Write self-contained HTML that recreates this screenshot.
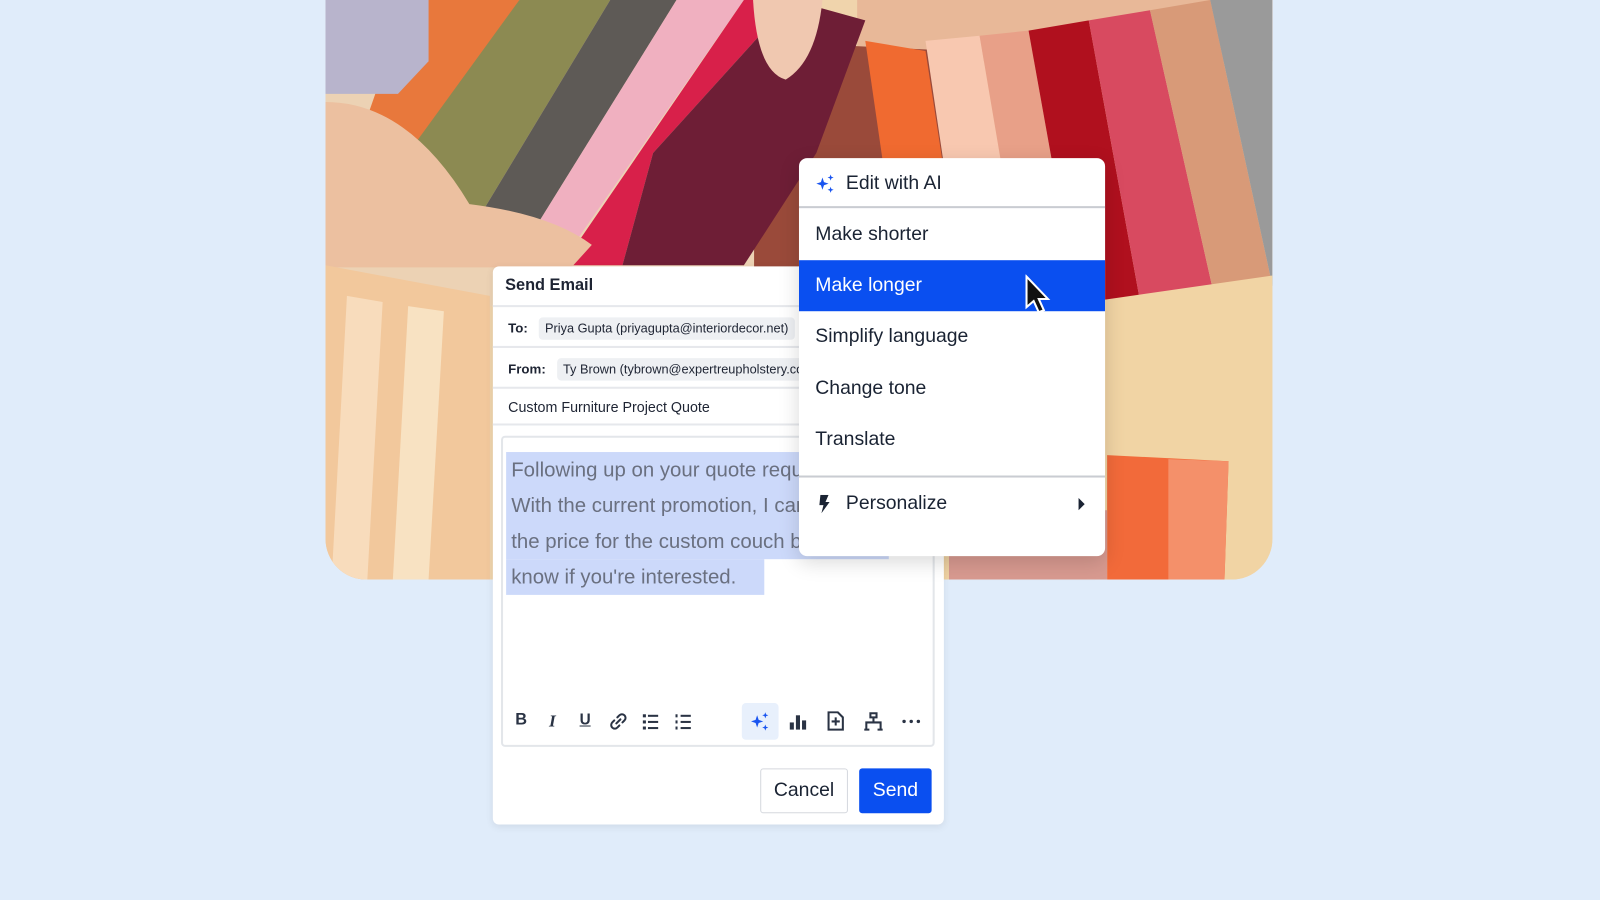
<!DOCTYPE html>
<html><head><style>
*{box-sizing:border-box;margin:0;padding:0}
body{width:1600px;height:900px;overflow:hidden;background:#e0ecfa;font-family:"Liberation Sans",sans-serif}
#w{position:absolute;left:0;top:0;width:1568px;height:882px;transform:scale(1.0204);transform-origin:0 0}
.photo{position:absolute;left:319px;top:0;width:928px;height:568px;border-radius:0 0 40px 40px;overflow:hidden}
.card{position:absolute;left:483px;top:261px;width:442px;height:547px;background:#fff;border-radius:6px;box-shadow:0 2px 8px rgba(0,0,0,.08)}
.row{position:absolute;left:0;width:442px;border-bottom:2px solid #e6e8ec;font-size:13px;color:#1e2433}
.chip{display:inline-block;background:#eef0f3;border-radius:4px;padding:4px 6px;font-size:12.5px}
.menu{position:absolute;left:783px;top:155px;width:300px;height:390px;background:#fff;border-radius:8px;box-shadow:0 6px 20px rgba(0,0,0,.15);overflow:hidden;color:#1a2333;font-size:19px}
.mi{position:absolute;left:0;width:300px;height:50px;line-height:50px;padding-left:16px}
.tb{position:absolute;top:697px}
</style></head><body><div id="w">
<div class="photo">
<svg width="928" height="568" viewBox="319 0 928 568">
 <rect x="319" y="0" width="928" height="568" fill="#f0d4ac"/>
 <rect x="840" y="0" width="407" height="60" fill="#e8b898"/>
 <polygon points="729,40 940,50 940,330 700,270" fill="#9a4a3a"/>
 <polygon points="848,40 907,50 950,330 890,330" fill="#f06a30"/>
 <polygon points="907,40 960,35 1010,330 950,330" fill="#f8c8b0"/>
 <polygon points="960,35 1008,30 1060,320 1010,330" fill="#e8a088"/>
 <polygon points="1008,30 1067,20 1120,310 1060,320" fill="#b0101e"/>
 <polygon points="1067,20 1127,10 1190,290 1120,310" fill="#d84a60"/>
 <polygon points="1127,10 1186,0 1247,280 1190,290" fill="#d89a78"/>
 <polygon points="1186,0 1247,0 1247,280" fill="#9a9a9a"/>
 <polygon points="900,320 1247,270 1247,568 900,568" fill="#f1d4a4"/>
 <polygon points="1085,446 1204,452 1200,568 1085,568" fill="#f26a3a"/>
 <polygon points="1145,450 1204,452 1200,568 1145,568" fill="#f4906a"/>
 <polygon points="930,500 1085,500 1085,568 930,568" fill="#d89a90"/>
 <rect x="319" y="0" width="420" height="300" fill="#ecd2b4"/>
 <polygon points="400,0 509,0 420,200 330,200" fill="#e8783c"/>
 <polygon points="509,0 598,0 473,207 420,200 400,150" fill="#8c8a52"/>
 <polygon points="598,0 663,0 521,229 473,207" fill="#5e5a56"/>
 <polygon points="663,0 729,0 562,240 521,229" fill="#f0b0c0"/>
 <polygon points="729,0 776,0 640,150 610,260 551,260" fill="#d8204a"/>
 <polygon points="776,0 848,20 800,150 729,260 610,260 640,150" fill="#6e1e36"/>
 <polygon points="319,0 420,0 420,60 390,92 319,92" fill="#b8b4cc"/>
 <path d="M319 100 Q400 100 460 200 Q540 210 580 240 L560 262 L319 262 Z" fill="#ecc0a0"/>
 <path d="M319 260 L480 290 L480 568 L319 568 Z" fill="#f2c89c"/>
 <polygon points="340,290 375,296 360,568 325,568" fill="#f8dcbc"/>
 <polygon points="400,300 435,305 420,568 385,568" fill="#f8e2c2"/>
 <path d="M738 0 L806 0 Q800 60 770 78 Q742 70 738 0Z" fill="#f0c8b0"/>
</svg>
</div>
<div class="card">
 <div class="row" style="top:0;height:40px;padding:10px 12px;font-size:16px;font-weight:bold">Send Email</div>
 <div class="row" style="top:40px;height:40px;padding:10px 15px"><b>To:</b>&nbsp;&nbsp; <span class="chip">Priya Gupta (priyagupta@interiordecor.net)</span></div>
 <div class="row" style="top:80px;height:40px;padding:10px 15px;white-space:nowrap;overflow:hidden"><b>From:</b>&nbsp;&nbsp; <span class="chip">Ty Brown (tybrown@expertreupholstery.com)</span></div>
 <div class="row" style="top:120px;height:36px;padding:10px 15px;font-size:14px">Custom Furniture Project Quote</div>
 <div style="position:absolute;left:8px;top:166px;width:425px;height:305px;border:2px solid #e3e6ea;border-radius:4px"></div>
 <div style="position:absolute;left:13px;top:182px;width:375px;height:105px;background:#ccd9fa"></div>
 <div style="position:absolute;left:13px;top:287px;width:253px;height:35px;background:#ccd9fa"></div>
 <div style="position:absolute;left:18px;top:183px;font-size:20px;line-height:35px;color:#6a7080;white-space:nowrap">Following up on your quote request.<br>With the current promotion, I can lower<br>the price for the custom couch by 15%. Let me<br>know if you're interested.</div>
 <div style="position:absolute;left:244px;top:428px;width:36px;height:36px;background:#e8f0fc;border-radius:4px"></div>
</div>
<span class="tb" style="left:505px;font-size:16px;font-weight:bold;color:#2a3344">B</span>
<span class="tb" style="left:538px;font-size:17px;font-weight:bold;font-style:italic;font-family:'Liberation Serif',serif;color:#2a3344">I</span>
<span class="tb" style="left:568px;font-size:15px;font-weight:bold;text-decoration:underline;color:#2a3344">U</span>
<svg class="tb" style="left:597px;top:698px" width="18" height="18" fill="none" stroke="#2a3344" stroke-width="2" stroke-linecap="round"><path d="M7 11l4-4 M8 5l2-2a3 3 0 0 1 5 5l-2 2 M10 13l-2 2a3 3 0 0 1-5-5l2-2"/></svg>
<svg class="tb" style="left:629px;top:699px" width="18" height="16" fill="#2a3344"><rect x="1" y="1" width="3" height="3"/><rect x="1" y="7" width="3" height="3"/><rect x="1" y="13" width="3" height="3"/><rect x="6" y="1.5" width="10" height="2"/><rect x="6" y="7.5" width="10" height="2"/><rect x="6" y="13.5" width="10" height="2"/></svg>
<svg class="tb" style="left:661px;top:699px" width="18" height="16" fill="#2a3344"><rect x="1" y="1" width="2" height="3"/><rect x="1" y="7" width="2" height="3"/><rect x="1" y="13" width="2" height="3"/><rect x="6" y="1.5" width="10" height="2"/><rect x="6" y="7.5" width="10" height="2"/><rect x="6" y="13.5" width="10" height="2"/></svg>
<svg style="position:absolute;left:735px;top:697px" width="20" height="20" viewBox="0 0 20 20" fill="#1a55f0"><path d="M7 4l1.5 4.5L13 10l-4.5 1.5L7 16l-1.5-4.5L1 10l4.5-1.5z"/><path d="M15 1l.8 2.2L18 4l-2.2.8L15 7l-.8-2.2L12 4l2.2-.8z"/><path d="M15 13l.8 2.2L18 16l-2.2.8L15 19l-.8-2.2L12 16l2.2-.8z"/></svg>
<svg style="position:absolute;left:773px;top:698px" width="18" height="18" fill="#2a3344"><rect x="1" y="10" width="4" height="7"/><rect x="7" y="3" width="4" height="14"/><rect x="13" y="8" width="4" height="9"/></svg>
<svg style="position:absolute;left:810px;top:697px" width="18" height="20" fill="none" stroke="#2a3344" stroke-width="2"><path d="M2 1h9l5 5v12H2z M9 6v8 M5 10h8"/></svg>
<svg style="position:absolute;left:846px;top:697px" width="20" height="20" fill="none" stroke="#2a3344" stroke-width="2"><path d="M7 2h6v4H7z M10 6v5 M3 17v-6h14v6 M1 18h5 M14 18h5"/></svg>
<svg style="position:absolute;left:884px;top:705px" width="18" height="4" fill="#2a3344"><circle cx="2" cy="2" r="1.7"/><circle cx="9" cy="2" r="1.7"/><circle cx="16" cy="2" r="1.7"/></svg>
<div style="position:absolute;left:745px;top:753px;width:86px;height:44px;border:1px solid #d5d8de;border-radius:3px;font-size:19px;line-height:42px;text-align:center;color:#1a2333;background:#fff">Cancel</div>
<div style="position:absolute;left:842px;top:753px;width:71px;height:44px;background:#0a4ff0;border-radius:3px;font-size:19px;line-height:44px;text-align:center;color:#fff">Send</div>
<div class="menu">
 <div class="mi" style="top:0;height:49px;line-height:49px;border-bottom:2px solid #c9ccd2;padding-left:46px">Edit with AI</div>
 <svg style="position:absolute;left:16px;top:15px" width="20" height="20" viewBox="0 0 20 20" fill="#1a55f0"><path d="M7 4l1.5 4.5L13 10l-4.5 1.5L7 16l-1.5-4.5L1 10l4.5-1.5z"/><path d="M15 1l.8 2.2L18 4l-2.2.8L15 7l-.8-2.2L12 4l2.2-.8z"/><path d="M15 13l.8 2.2L18 16l-2.2.8L15 19l-.8-2.2L12 16l2.2-.8z"/></svg>
 <div class="mi" style="top:50px">Make shorter</div>
 <div class="mi" style="top:100px;background:#0a4ff0;color:#fff">Make longer</div>
 <div class="mi" style="top:150px">Simplify language</div>
 <div class="mi" style="top:201px">Change tone</div>
 <div class="mi" style="top:251px">Translate</div>
 <div style="position:absolute;left:0;top:311px;width:300px;border-top:2px solid #c9ccd2"></div>
 <div class="mi" style="top:314px;padding-left:46px">Personalize</div>
 <svg style="position:absolute;left:18px;top:330px" width="14" height="18"><path d="M3 0h8L8 7h4L4 18l2-8H2z" fill="#1a2333"/></svg>
 <svg style="position:absolute;left:273px;top:333px" width="8" height="12"><path d="M1 0l6 6-6 6z" fill="#1a2333"/></svg>
 <svg style="position:absolute;left:220px;top:114px" width="30" height="42"><path d="M3 2v30l7-6 5 11 5-2-5-11h9z" fill="#111" stroke="#fff" stroke-width="2"/></svg>
</div>
</div></body></html>
